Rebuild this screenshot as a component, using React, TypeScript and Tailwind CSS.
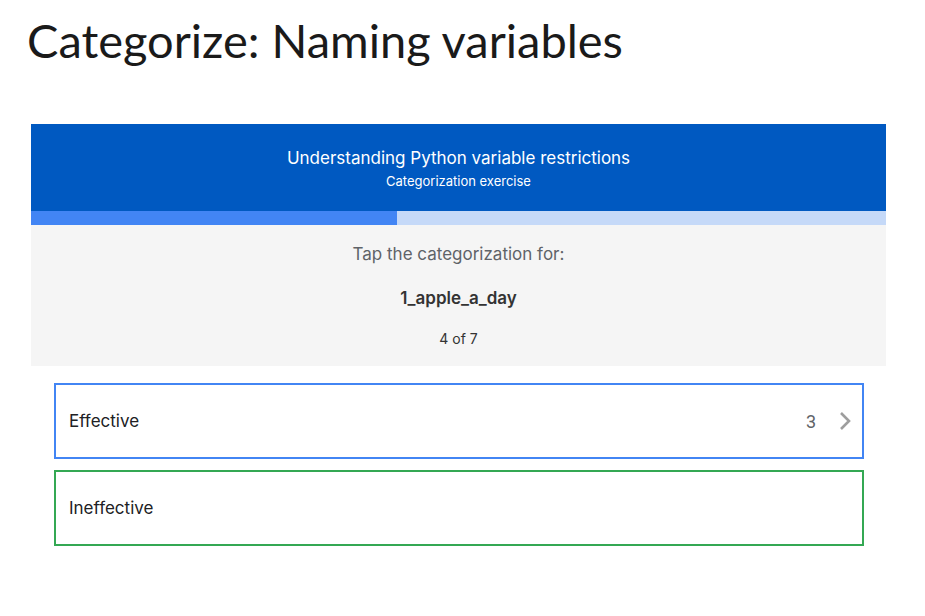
import React from 'react';

const categories = [
  { label: 'Effective', count: 3, border: 'border-[#4285f4]' },
  { label: 'Ineffective', count: null, border: 'border-[#34a853]' },
];

export default function App() {
  return (
    <div className="w-[925px] h-[616px] bg-white">
      <h1
        className="pl-[27px] pt-[10px] text-[47px] leading-[60px] text-[#1a1a1a]"
        style={{ fontFamily: 'Lato, sans-serif' }}
      >
        Categorize: Naming variables
      </h1>

      <div className="mt-[54px] ml-[31px] w-[855px]" style={{ fontFamily: 'Inter, sans-serif' }}>
        <div className="h-[87px] bg-[#0059c1] flex flex-col items-center justify-center text-white pt-[2px]">
          <div className="text-[17px] leading-[22px]">Understanding Python variable restrictions</div>
          <div className="text-[13px] leading-[18px] mt-[3px]">Categorization exercise</div>
        </div>
        <div className="h-[14px] bg-[#c5d9f8] flex">
          <div className="w-[366px] bg-[#4285f4]" />
        </div>
        <div className="h-[141px] bg-[#f5f5f5] flex flex-col items-center pt-[17px]">
          <div className="text-[17px] leading-[24px] text-[#5f6368]">Tap the categorization for:</div>
          <div className="mt-[20px] text-[17px] leading-[24px] font-semibold text-[#333]">1_apple_a_day</div>
          <div className="mt-[19px] text-[14px] leading-[20px] text-[#333]">4 of 7</div>
        </div>
      </div>

      <div className="ml-[54px] mt-[17px] w-[810px] flex flex-col gap-[11px]" style={{ fontFamily: 'Inter, sans-serif' }}>
        {categories.map((c) => (
          <div key={c.label} className={`h-[76px] border-2 ${c.border} flex items-center pl-[13px] pr-[10px]`}>
            <span className="text-[17px] text-[#202124] mt-[1px]">{c.label}</span>
            {c.count !== null && (
              <div className="ml-auto flex items-center gap-[22px]">
                <span className="text-[18px] text-[#5f6368]" style={{ fontFamily: 'Roboto, sans-serif' }}>{c.count}</span>
                <svg width="14" height="20" viewBox="0 0 14 20">
                  <path d="M3 2 L11 10 L3 18" fill="none" stroke="#9e9e9e" strokeWidth="2.6" />
                </svg>
              </div>
            )}
          </div>
        ))}
      </div>
    </div>
  );
}
